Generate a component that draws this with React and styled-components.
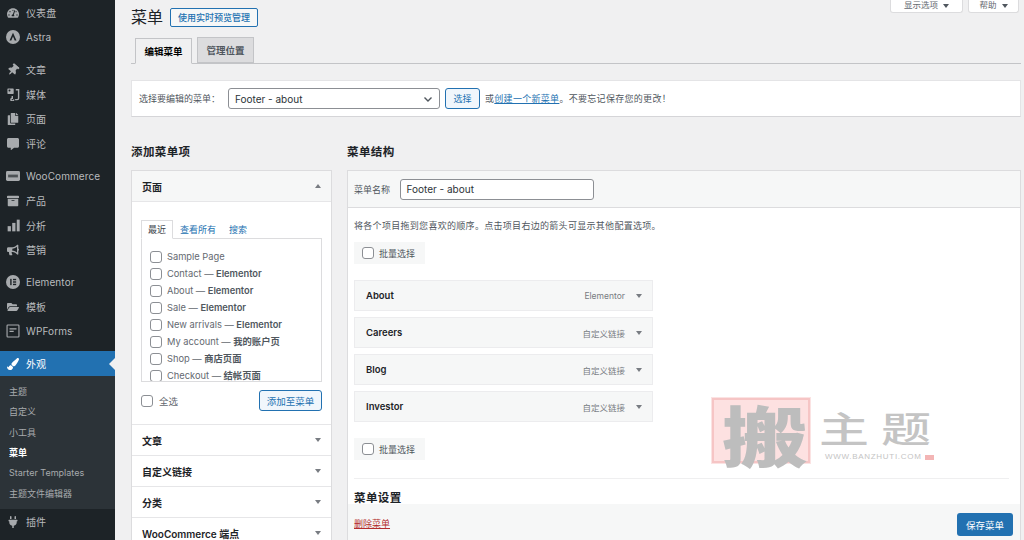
import React from "react";
import styled, { createGlobalStyle } from "styled-components";
import { FaThumbtack, FaCopy, FaCommentAlt, FaArchive, FaBullhorn, FaFolderOpen, FaPaintBrush, FaPlug, FaTachometerAlt } from "react-icons/fa";

const Global = createGlobalStyle`
  html, body { margin: 0; padding: 0; height: 540px; overflow: hidden; background: #f0f0f1; }
  #root { height: 540px; overflow: hidden; }
  * { box-sizing: border-box; }
  body { font-family: Inter, "Noto Sans CJK SC", "Liberation Sans", sans-serif; font-size: 10px; color: #3c434a; }
`;

const Page = styled.div`display: flex; width: 1024px; height: 540px; overflow: hidden;`;

const Sidebar = styled.nav`width: 115px; flex: none; height: 540px; background: #1d2327; color: #c3c4c7; overflow: hidden; padding-top: .5px;`;
const Group = styled.div`margin-bottom: 7.8px;`;
const Row = styled.div`
  display: flex; align-items: center; height: 24.6px; padding-left: 6px; gap: 6px;
  font-size: 10px; letter-spacing: .1px; color: #b9bbbe; position: relative;
  ${p => p.$active && `
    background: #2271b1; color: #fff; height: 25px;
    &::after { content: ""; position: absolute; right: 0; top: 7px; border: 6px solid transparent; border-right-color: #f0f0f1; border-left: 0; }
  `}
`;
const IconSlot = styled.span`width: 14px; height: 14px; flex: none; display: flex; align-items: center; justify-content: center; font-size: 12px; color: ${p => p.$active ? "#fff" : "#a7aaad"};`;
const Submenu = styled.div`background: #2c3338; height: 133px; padding-top: 5px; margin-bottom: 0;`;
const SubItem = styled.div`height: 20.3px; display: flex; align-items: center; padding-left: 9px; font-size: 9px; color: ${p => p.$current ? "#fff" : "#a7aaad"}; font-weight: ${p => p.$current ? 700 : 400};`;

const Main = styled.main`flex: 1; position: relative; padding: 0 3px 0 16px; min-width: 0; height: 540px; overflow: hidden;`;
const Head = styled.div`display: flex; justify-content: space-between; align-items: flex-start; height: 37px;`;
const TitleWrap = styled.div`display: flex; align-items: center; gap: 7px; padding-top: 7px;`;
const Title = styled.h1`margin: 0; font-size: 16px; font-weight: 400; line-height: 20px; color: #1d2327;`;
const LiveBtn = styled.a`height: 19px; width: 88px; display: flex; align-items: center; justify-content: center; border: 1px solid #2271b1; border-radius: 2px; background: #f6f7f7; color: #2271b1; font-size: 9px; font-weight: 500;`;
const Meta = styled.div`display: flex; gap: 5px; margin-right: 2px;`;
const MetaTab = styled.div`height: 13px; width: ${p => p.$w}px; background: #fff; border: 1px solid #dcdcde; border-top: 0; border-radius: 0 0 3px 3px; display: flex; align-items: center; justify-content: center; gap: 5px; padding-bottom: 1px; font-size: 8.5px; line-height: 11px; color: #646970;`;
const Caret = styled.i`display: inline-block; width: 0; height: 0; border-left: 3px solid transparent; border-right: 3px solid transparent; border-${p => p.$up ? "bottom" : "top"}: 4px solid ${p => p.$color || "#50575e"};`;

const Tabs = styled.div`display: flex; gap: 5px; height: 27px; padding-left: 4px; border-bottom: 1px solid #c3c4c7; align-items: flex-end;`;
const Tab = styled.div`
  width: 57px; display: flex; align-items: center; justify-content: center; font-size: 9.5px; font-weight: 600;
  height: 26px; border: 1px solid #c3c4c7;
  background: ${p => p.$on ? "#f0f0f1" : "#dcdcde"}; color: ${p => p.$on ? "#000" : "#50575e"};
  ${p => p.$on && "border-bottom-color: #f0f0f1; margin-bottom: -1px;"}
`;
const SelectPanel = styled.div`margin-top: 16px; height: 37px; background: #fff; border: 1px solid #e4e4e6; border-bottom-color: #d5d5d8; display: flex; align-items: center; padding-left: 7px; font-size: 9px; color: #50575e;`;
const SelectLabel = styled.span`width: 89px;`;
const FakeSelect = styled.div`width: 212px; height: 21px; border: 1px solid #8c8f94; border-radius: 3px; background: #fff; display: flex; align-items: center; justify-content: space-between; padding: 0 6px; font-size: 10px; color: #2c3338;`;
const SelectBtn = styled.a`width: 35px; height: 21px; margin: 0 5px; border: 1px solid #2271b1; border-radius: 3px; background: #f0f6fc; color: #2271b1; display: flex; align-items: center; justify-content: center; font-size: 9px;`;
const SelectNote = styled.span`letter-spacing: .3px;`;
const Link = styled.a`color: #2271b1; text-decoration: underline;`;

const Cols = styled.div`display: flex; gap: 15px; margin-top: 26px;`;
const LeftCol = styled.section`width: 201px; flex: none;`;
const RightCol = styled.section`flex: 1; min-width: 0;`;
const Heading = styled.h2`margin: 0 0 9px; font-size: 11.5px; line-height: 18px; font-weight: 700; color: #1d2327; letter-spacing: .4px;`;
const Box = styled.div`background: #fff; border: 1px solid #dcdcde;`;
const AccHead = styled.div`height: 31px; display: flex; align-items: center; justify-content: space-between; padding: 0 10px; font-size: 10px; font-weight: 600; color: #1d2327; background: ${p => p.$open ? "#f6f7f7" : "#fff"}; border-bottom: 1px solid #e6e6e8;`;
const AccBody = styled.div`height: 223px; padding: 18px 9px 0; border-bottom: 1px solid #e6e6e8;`;
const InnerTabs = styled.div`display: flex; height: 18px; font-size: 9px; padding-left: 0;`;
const InnerTab = styled.div`display: flex; align-items: center; padding: 0 6px; margin-right: 1px; color: ${p => p.$on ? "#3c434a" : "#2271b1"}; ${p => p.$on && "border: 1px solid #dcdcde; border-bottom: 1px solid #fff; margin-bottom: -1px; height: 19px; position: relative; z-index: 1; background: #fff;"}`;
const ListBox = styled.div`height: 144px; border: 1px solid #dcdcde; overflow: hidden; padding: 10px 0 0 8px;`;
const ListRow = styled.label`display: flex; align-items: center; gap: 5px; height: 16.9px; font-size: 9.3px; line-height: 12px; color: #646970; white-space: nowrap; b { color: #50575e; font-weight: 600; }`;
const Check = styled.span`width: 12px; height: 12px; flex: none; border: 1px solid #8c8f94; border-radius: 3px; background: #fff;`;
const Actions = styled.div`display: flex; justify-content: space-between; align-items: center; margin-top: 8px;`;
const AllLabel = styled.label`display: flex; align-items: center; gap: 6px; font-size: 9.5px; color: #646970;`;
const AddBtn = styled.a`width: 63px; height: 21px; border: 1px solid #2271b1; border-radius: 3px; background: #f0f6fc; color: #2271b1; display: flex; align-items: center; justify-content: center; font-size: 9.5px;`;

const Editor = styled(Box)`height: 400px; display: flex; flex-direction: column;`;
const NameBar = styled.div`height: 37px; flex: none; background: #f6f7f7; border-bottom: 1px solid #dcdcde; display: flex; align-items: center; padding-left: 6px; gap: 9.5px; font-size: 9px; color: #50575e;`;
const NameInput = styled.div`width: 194px; height: 21px; border: 1px solid #8c8f94; border-radius: 3px; background: #fff; display: flex; align-items: center; padding-left: 6px; font-size: 10px; color: #2c3338;`;
const EditorBody = styled.div`height: 296px; flex: none; background: #fff; padding: 11px 7px 0 6px; overflow: hidden;`;
const Hint = styled.p`margin: 0; font-size: 9px; line-height: 14px; color: #50575e; letter-spacing: .3px;`;
const Bulk = styled.div`width: 71px; height: 22px; margin-top: ${p => p.$mt}px; background: #f6f7f7; display: flex; align-items: center; gap: 5px; padding-left: 8px; font-size: 9px; color: #50575e;`;
const Items = styled.div`display: flex; flex-direction: column; gap: 6px; margin-top: 16px; width: 299px;`;
const Item = styled.div`height: 31px; background: #f6f7f7; border: 1px solid #ececee; display: flex; align-items: center; padding: 0 10px 0 11px; font-size: 9.5px; font-weight: 600; color: #1d2327;`;
const ItemType = styled.span`margin-left: auto; margin-right: 11px; font-size: 8.5px; font-weight: 400; color: #787c82;`;
const Divider = styled.div`height: 1px; background: #efeff0; margin-top: 18px; margin-right: 4px;`;
const SubHead = styled.h3`margin: 11px 0 0; font-size: 11.5px; line-height: 16px; font-weight: 700; color: #1d2327; letter-spacing: .4px;`;
const Footer = styled.div`flex: 1; background: #f6f7f7; display: flex; align-items: flex-start; justify-content: space-between; padding: 9px 7px 0 6px;`;
const Delete = styled.a`color: #b32d2e; font-size: 9px; text-decoration: underline; margin-top: 4px;`;
const Save = styled.a`width: 56px; height: 23px; border-radius: 3px; background: #2271b1; color: #fff; display: flex; align-items: center; justify-content: center; font-size: 9.5px;`;

const Mark = styled.div`position: absolute; left: 597px; top: 398px; width: 230px; height: 70px; pointer-events: none;`;
const Seal = styled.div`position: absolute; left: 0; top: 0; width: 98px; height: 65px; background: #fde1e1; border: 2px solid #f6c5c5; outline: 1px solid #fbe3e3; display: flex; align-items: center; justify-content: center; overflow: visible;`;
const SealGlyph = styled.span`font-family: "Noto Sans CJK SC", sans-serif; font-weight: 900; font-size: 66px; line-height: 66px; color: #bdbdbd; transform: scaleX(1.3) translate(3px, 2px);`;
const MarkTitle = styled.div`position: absolute; left: 107px; top: 4px; font-family: "Noto Sans CJK SC", sans-serif; font-weight: 500; font-size: 50px; line-height: 50px; letter-spacing: 12px; color: #c4c4c4; white-space: nowrap; transform: scaleY(.72);`;
const MarkUrl = styled.div`position: absolute; left: 113px; top: 54px; font-family: "Liberation Sans", sans-serif; font-size: 8px; line-height: 10px; letter-spacing: .7px; color: #c4c4c4; white-space: nowrap; display: flex; align-items: center; gap: 3px; &::after { content: ""; width: 9px; height: 5px; background: #f3b5b5; }`;

const Astra = () => (<svg width="14" height="14" viewBox="0 0 20 20"><circle cx="10" cy="10" r="10" fill="#a7aaad"/><path d="M10 4l5 11h-2.6l-2.4-5.6L7.6 15H5z" fill="#1d2327"/></svg>);
const Media = () => (<svg width="14" height="14" viewBox="0 0 20 20" fill="none" stroke="#a7aaad" strokeWidth="2"><rect x="2" y="2" width="9" height="8" rx="1" fill="#a7aaad" stroke="none"/><circle cx="5" cy="5" r="1.4" fill="#1d2327" stroke="none"/><path d="M14 4h4v12a2 2 0 01-2 2h-3"/><path d="M9 13v3a2 2 0 102 2"/></svg>);
const Woo = () => (<svg width="16" height="12" viewBox="0 0 20 14"><rect width="20" height="14" rx="2" fill="#a7aaad"/><rect x="3" y="5" width="14" height="4" fill="#1d2327" opacity=".65"/></svg>);
const Bars = () => (<svg width="13" height="13" viewBox="0 0 20 20" fill="#a7aaad"><rect x="1" y="11" width="5" height="8"/><rect x="8" y="6" width="5" height="13"/><rect x="15" y="1" width="4.5" height="18"/></svg>);
const Elem = () => (<svg width="14" height="14" viewBox="0 0 20 20"><circle cx="10" cy="10" r="10" fill="#a7aaad"/><rect x="6" y="5.5" width="2" height="9" fill="#1d2327"/><rect x="10" y="5.5" width="4.5" height="2" fill="#1d2327"/><rect x="10" y="9" width="4.5" height="2" fill="#1d2327"/><rect x="10" y="12.5" width="4.5" height="2" fill="#1d2327"/></svg>);
const Forms = () => (<svg width="14" height="14" viewBox="0 0 20 20" fill="none" stroke="#a7aaad" strokeWidth="1.6"><rect x="1.5" y="1.5" width="17" height="17" rx="1"/><path d="M5 7h10M5 10.5h6"/></svg>);
const Chevron = () => (<svg width="10" height="10" viewBox="0 0 10 10" fill="none" stroke="#50575e" strokeWidth="1.4"><path d="M1.5 3.5L5 7l3.5-3.5"/></svg>);

const nav = [
  [["仪表盘", <FaTachometerAlt/>], ["Astra", <Astra/>]],
  [["文章", <FaThumbtack style={{transform:"rotate(40deg)"}}/>], ["媒体", <Media/>], ["页面", <FaCopy/>], ["评论", <FaCommentAlt/>]],
  [["WooCommerce", <Woo/>], ["产品", <FaArchive/>], ["分析", <Bars/>], ["营销", <FaBullhorn/>]],
  [["Elementor", <Elem/>], ["模板", <FaFolderOpen/>], ["WPForms", <Forms/>]],
];
const sub = ["主题", "自定义", "小工具", "菜单", "Starter Templates", "主题文件编辑器"];
const pages = [["Sample Page", ""], ["Contact — ", "Elementor"], ["About — ", "Elementor"], ["Sale — ", "Elementor"], ["New arrivals — ", "Elementor"], ["My account — ", "我的账户页"], ["Shop — ", "商店页面"], ["Checkout — ", "结帐页面"]];
const closed = ["文章", "自定义链接", "分类", "WooCommerce 端点"];
const items = [["About", "Elementor"], ["Careers", "自定义链接"], ["Blog", "自定义链接"], ["Investor", "自定义链接"]];

export default function App() {
  return (
    <Page>
      <Global />
      <Sidebar>
        {nav.map((g, i) => (
          <Group key={i}>
            {g.map(([t, ic]) => <Row key={t}><IconSlot>{ic}</IconSlot>{t}</Row>)}
          </Group>
        ))}
        <Row $active><IconSlot $active><FaPaintBrush/></IconSlot>外观</Row>
        <Submenu>
          {sub.map(s => <SubItem key={s} $current={s === "菜单"}>{s}</SubItem>)}
        </Submenu>
        <Row><IconSlot><FaPlug/></IconSlot>插件</Row>
      </Sidebar>
      <Main>
        <Head>
          <TitleWrap>
            <Title>菜单</Title>
            <LiveBtn>使用实时预览管理</LiveBtn>
          </TitleWrap>
          <Meta>
            <MetaTab $w={73}>显示选项 <Caret/></MetaTab>
            <MetaTab $w={51}>帮助 <Caret/></MetaTab>
          </Meta>
        </Head>
        <Tabs>
          <Tab $on>编辑菜单</Tab>
          <Tab>管理位置</Tab>
        </Tabs>
        <SelectPanel>
          <SelectLabel>选择要编辑的菜单：</SelectLabel>
          <FakeSelect>Footer - about<Chevron/></FakeSelect>
          <SelectBtn>选择</SelectBtn>
          <SelectNote>或<Link>创建一个新菜单</Link>。不要忘记保存您的更改！</SelectNote>
        </SelectPanel>
        <Cols>
          <LeftCol>
            <Heading>添加菜单项</Heading>
            <Box>
              <AccHead $open>页面<Caret $up $color="#787c82"/></AccHead>
              <AccBody>
                <InnerTabs>
                  <InnerTab $on>最近</InnerTab>
                  <InnerTab>查看所有</InnerTab>
                  <InnerTab>搜索</InnerTab>
                </InnerTabs>
                <ListBox>
                  {pages.map(([a, b]) => <ListRow key={a}><Check/><span>{a}<b>{b}</b></span></ListRow>)}
                </ListBox>
                <Actions>
                  <AllLabel><Check/>全选</AllLabel>
                  <AddBtn>添加至菜单</AddBtn>
                </Actions>
              </AccBody>
              {closed.map(c => <AccHead key={c}>{c}<Caret $color="#787c82"/></AccHead>)}
            </Box>
          </LeftCol>
          <RightCol>
            <Heading>菜单结构</Heading>
            <Editor>
              <NameBar>菜单名称<NameInput>Footer - about</NameInput></NameBar>
              <EditorBody>
                <Hint>将各个项目拖到您喜欢的顺序。点击项目右边的箭头可显示其他配置选项。</Hint>
                <Bulk $mt={9}><Check/>批量选择</Bulk>
                <Items>
                  {items.map(([t, k]) => <Item key={t}>{t}<ItemType>{k}</ItemType><Caret $color="#787c82"/></Item>)}
                </Items>
                <Bulk $mt={16}><Check/>批量选择</Bulk>
                <Divider/>
                <SubHead>菜单设置</SubHead>
              </EditorBody>
              <Footer>
                <Delete>删除菜单</Delete>
                <Save>保存菜单</Save>
              </Footer>
            </Editor>
          </RightCol>
        </Cols>
        <Mark>
          <Seal><SealGlyph>搬</SealGlyph></Seal>
          <MarkTitle>主题</MarkTitle>
          <MarkUrl>WWW.BANZHUTI.COM</MarkUrl>
        </Mark>
      </Main>
    </Page>
  );
}
